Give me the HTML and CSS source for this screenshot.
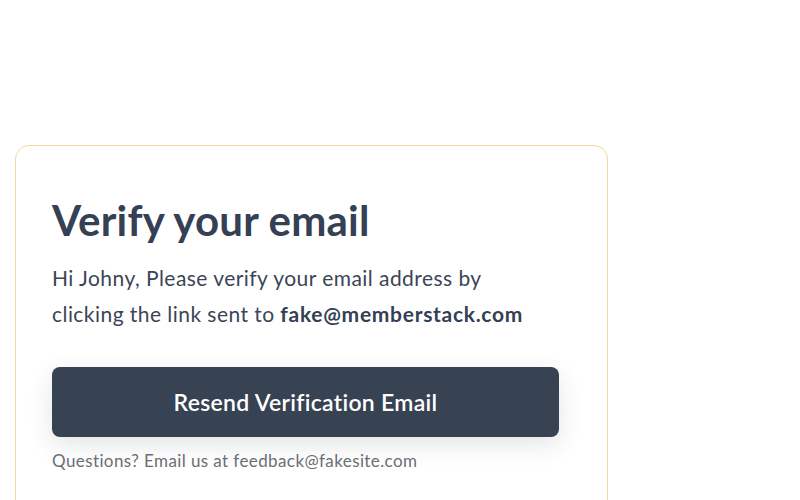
FILE: index.html
```html
<!DOCTYPE html>
<html lang="en">
<head>
  <meta charset="UTF-8">
  <title>Verify your email</title>
  <link rel="stylesheet" href="styles.css">
</head>
<body>
  <div class="card">
    <h1>Verify your email</h1>
    <p class="lead">Hi Johny, Please verify your email address by<br>
      clicking the link sent to <strong>fake@memberstack.com</strong></p>
    <button type="button" class="resend">Resend Verification Email</button>
    <p class="help">Questions? Email us at feedback@fakesite.com</p>
  </div>
</body>
</html>
```

FILE: styles.css
```css
body {
  margin: 0;
  font-family: Lato, "Noto Sans", sans-serif;
  background: #fff;
  color: #364152;
}
.card {
  box-sizing: border-box;
  width: 593px;
  margin: 145px 0 0 15px;
  padding: 48px 48px 60px 36px;
  border: 1px solid #f1d9a0;
  border-radius: 14px;
  background: #fff;
}
h1 {
  margin: 0;
  font-size: 42px;
  line-height: 52px;
  font-weight: 700;
  letter-spacing: 0.2px;
  color: #344054;
}
.lead {
  margin: 14px 0 0;
  font-size: 21px;
  line-height: 36px;
  letter-spacing: 0.45px;
  white-space: nowrap;
  color: #3b4556;
}
.lead strong {
  font-weight: 700;
  letter-spacing: 0.7px;
  color: #344054;
}
.resend {
  display: block;
  width: 100%;
  height: 70px;
  margin-top: 35px;
  border: none;
  border-radius: 8px;
  background: #374253;
  color: #fff;
  font-family: inherit;
  font-size: 23px;
  font-weight: 600;
  letter-spacing: 0.3px;
  box-shadow: 0 8px 24px rgba(30, 40, 60, 0.12);
  cursor: pointer;
}
.help {
  margin: 13px 0 0;
  font-size: 17px;
  line-height: 22px;
  letter-spacing: 0.4px;
  color: #6b6e73;
}
```
